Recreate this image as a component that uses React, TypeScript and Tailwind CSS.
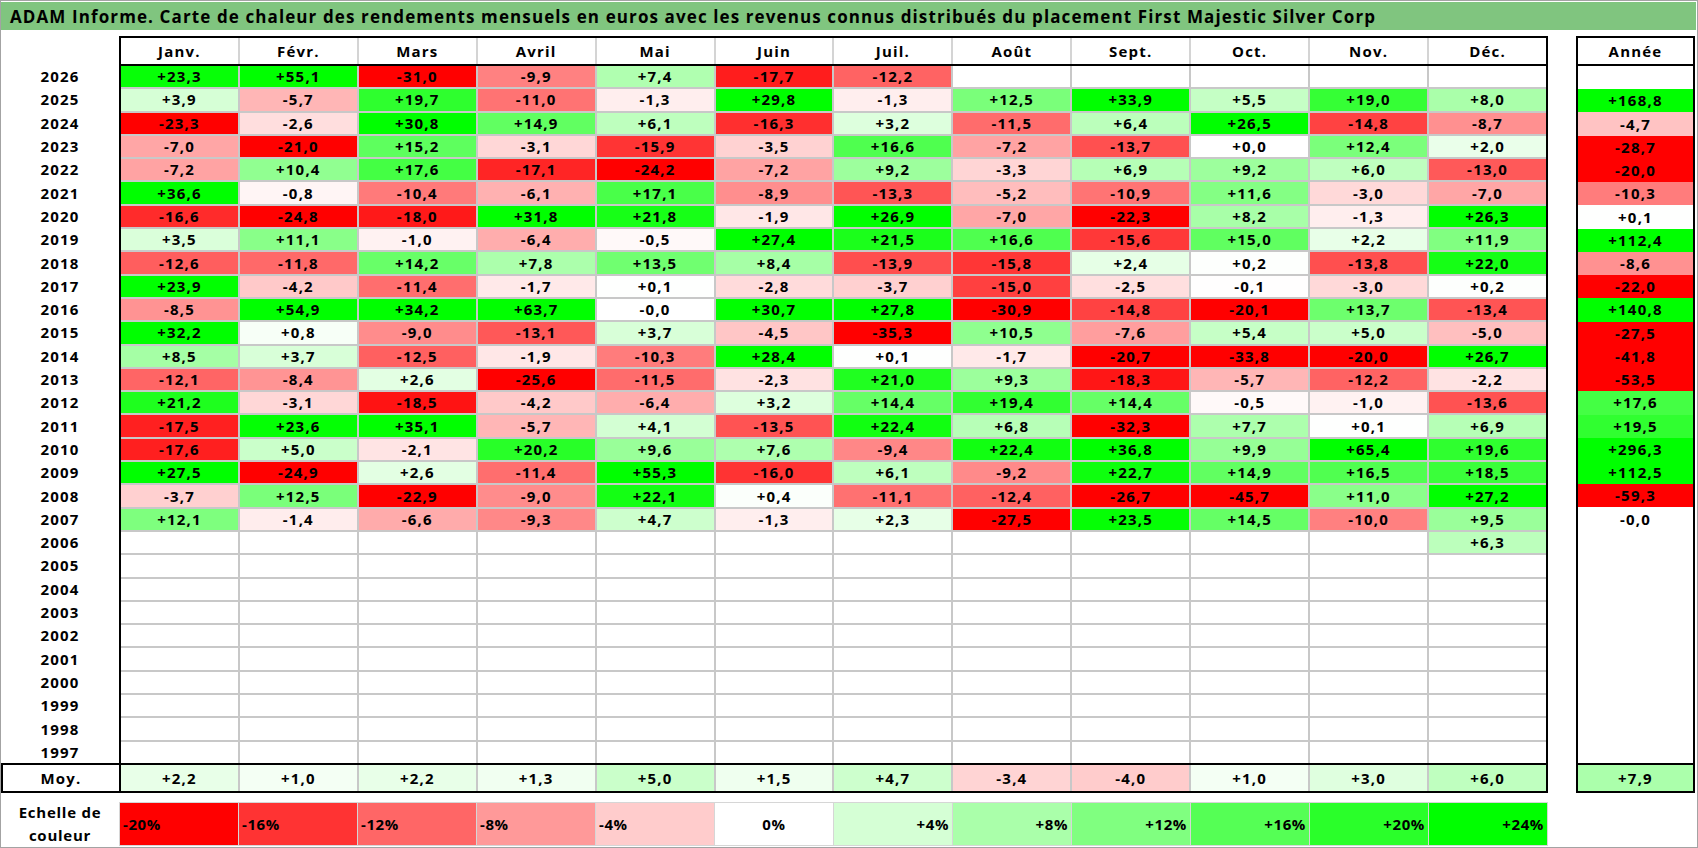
const months = ["Janv.", "Févr.", "Mars", "Avril", "Mai", "Juin", "Juil.", "Août", "Sept.", "Oct.", "Nov.", "Déc."];

// year, 12 months, year total ("" = no value)
const rows: [string, string[], string][] = [
  ["2026", ["+23,3", "+55,1", "-31,0", "-9,9", "+7,4", "-17,7", "-12,2", "", "", "", "", ""], ""],
  ["2025", ["+3,9", "-5,7", "+19,7", "-11,0", "-1,3", "+29,8", "-1,3", "+12,5", "+33,9", "+5,5", "+19,0", "+8,0"], "+168,8"],
  ["2024", ["-23,3", "-2,6", "+30,8", "+14,9", "+6,1", "-16,3", "+3,2", "-11,5", "+6,4", "+26,5", "-14,8", "-8,7"], "-4,7"],
  ["2023", ["-7,0", "-21,0", "+15,2", "-3,1", "-15,9", "-3,5", "+16,6", "-7,2", "-13,7", "+0,0", "+12,4", "+2,0"], "-28,7"],
  ["2022", ["-7,2", "+10,4", "+17,6", "-17,1", "-24,2", "-7,2", "+9,2", "-3,3", "+6,9", "+9,2", "+6,0", "-13,0"], "-20,0"],
  ["2021", ["+36,6", "-0,8", "-10,4", "-6,1", "+17,1", "-8,9", "-13,3", "-5,2", "-10,9", "+11,6", "-3,0", "-7,0"], "-10,3"],
  ["2020", ["-16,6", "-24,8", "-18,0", "+31,8", "+21,8", "-1,9", "+26,9", "-7,0", "-22,3", "+8,2", "-1,3", "+26,3"], "+0,1"],
  ["2019", ["+3,5", "+11,1", "-1,0", "-6,4", "-0,5", "+27,4", "+21,5", "+16,6", "-15,6", "+15,0", "+2,2", "+11,9"], "+112,4"],
  ["2018", ["-12,6", "-11,8", "+14,2", "+7,8", "+13,5", "+8,4", "-13,9", "-15,8", "+2,4", "+0,2", "-13,8", "+22,0"], "-8,6"],
  ["2017", ["+23,9", "-4,2", "-11,4", "-1,7", "+0,1", "-2,8", "-3,7", "-15,0", "-2,5", "-0,1", "-3,0", "+0,2"], "-22,0"],
  ["2016", ["-8,5", "+54,9", "+34,2", "+63,7", "-0,0", "+30,7", "+27,8", "-30,9", "-14,8", "-20,1", "+13,7", "-13,4"], "+140,8"],
  ["2015", ["+32,2", "+0,8", "-9,0", "-13,1", "+3,7", "-4,5", "-35,3", "+10,5", "-7,6", "+5,4", "+5,0", "-5,0"], "-27,5"],
  ["2014", ["+8,5", "+3,7", "-12,5", "-1,9", "-10,3", "+28,4", "+0,1", "-1,7", "-20,7", "-33,8", "-20,0", "+26,7"], "-41,8"],
  ["2013", ["-12,1", "-8,4", "+2,6", "-25,6", "-11,5", "-2,3", "+21,0", "+9,3", "-18,3", "-5,7", "-12,2", "-2,2"], "-53,5"],
  ["2012", ["+21,2", "-3,1", "-18,5", "-4,2", "-6,4", "+3,2", "+14,4", "+19,4", "+14,4", "-0,5", "-1,0", "-13,6"], "+17,6"],
  ["2011", ["-17,5", "+23,6", "+35,1", "-5,7", "+4,1", "-13,5", "+22,4", "+6,8", "-32,3", "+7,7", "+0,1", "+6,9"], "+19,5"],
  ["2010", ["-17,6", "+5,0", "-2,1", "+20,2", "+9,6", "+7,6", "-9,4", "+22,4", "+36,8", "+9,9", "+65,4", "+19,6"], "+296,3"],
  ["2009", ["+27,5", "-24,9", "+2,6", "-11,4", "+55,3", "-16,0", "+6,1", "-9,2", "+22,7", "+14,9", "+16,5", "+18,5"], "+112,5"],
  ["2008", ["-3,7", "+12,5", "-22,9", "-9,0", "+22,1", "+0,4", "-11,1", "-12,4", "-26,7", "-45,7", "+11,0", "+27,2"], "-59,3"],
  ["2007", ["+12,1", "-1,4", "-6,6", "-9,3", "+4,7", "-1,3", "+2,3", "-27,5", "+23,5", "+14,5", "-10,0", "+9,5"], "-0,0"],
  ["2006", ["", "", "", "", "", "", "", "", "", "", "", "+6,3"], ""],
  ...["2005", "2004", "2003", "2002", "2001", "2000", "1999", "1998", "1997"].map(
    (y): [string, string[], string] => [y, Array(12).fill(""), ""]
  ),
];

const avg = ["+2,2", "+1,0", "+2,2", "+1,3", "+5,0", "+1,5", "+4,7", "-3,4", "-4,0", "+1,0", "+3,0", "+6,0"];
const avgYear = "+7,9";

const scale = ["-20%", "-16%", "-12%", "-8%", "-4%", "0%", "+4%", "+8%", "+12%", "+16%", "+20%", "+24%"];

// red below zero (full at -20), green above (full at +24)
function heat(s: string) {
  if (!s) return "#ffffff";
  const v = parseFloat(s.replace(",", ".").replace("%", ""));
  if (v > 0) {
    const c = Math.round(255 * (1 - Math.min(v, 24) / 24));
    return `rgb(${c},255,${c})`;
  }
  if (v < 0) {
    const c = Math.round(255 * (1 - Math.min(-v, 20) / 20));
    return `rgb(255,${c},${c})`;
  }
  return "#ffffff";
}

const Cell = ({ value }: { value: string }) => (
  <div className="flex items-center justify-center" style={{ backgroundColor: heat(value) }}>
    {value}
  </div>
);

export default function App() {
  return (
    <div className="w-[1698px] h-[848px] overflow-hidden bg-white border border-[#a3a3a3] font-['Open_Sans',sans-serif] text-black font-bold text-[15px] tracking-[0.08em] leading-none">
      {/* Title */}
      <div className="h-[28px] mr-[1px] mt-[1px] bg-[#80c57f] flex items-center pl-[9px] text-[17px] tracking-[0.065em]">
        ADAM Informe. Carte de chaleur des rendements mensuels en euros avec les revenus connus distribués du placement First Majestic Silver Corp
      </div>

      <div className="mt-[6px] flex">
        {/* Monthly table */}
        <div className="w-[1547px] flex flex-col">
          <div className="flex h-[30px]">
            <div className="w-[118px]" />
            <div className="flex-1 border-2 border-black grid grid-cols-12 gap-x-[2px] bg-[#d4d4d4]">
              {months.map((m) => (
                <div key={m} className="bg-white flex items-center justify-center">
                  {m}
                </div>
              ))}
            </div>
          </div>

          <div className="flex h-[697px]">
            <div className="w-[118px] grid grid-rows-[repeat(30,minmax(0,1fr))] gap-y-[2px]">
              {rows.map(([y]) => (
                <div key={y} className="flex items-center justify-center">
                  {y}
                </div>
              ))}
            </div>
            <div className="flex-1 border-x-2 border-black grid grid-cols-12 grid-rows-[repeat(30,minmax(0,1fr))] gap-[2px] bg-[#c8c8c8]">
              {rows.map(([y, vals]) => vals.map((v, i) => <Cell key={y + i} value={v} />))}
            </div>
          </div>

          <div className="flex h-[30px] border-2 border-black">
            <div className="w-[118px] border-r-2 border-black flex items-center justify-center">Moy.</div>
            <div className="flex-1 grid grid-cols-12 gap-x-[2px] bg-[#c8c8c8]">
              {avg.map((v, i) => (
                <Cell key={i} value={v} />
              ))}
            </div>
          </div>

          {/* Colour scale */}
          <div className="mt-[9px] flex h-[44px]">
            <div className="w-[118px] flex flex-col items-center justify-center leading-[23px] tracking-[0.05em]">
              <span>Echelle de</span>
              <span>couleur</span>
            </div>
            <div className="flex-1 grid grid-cols-12 gap-x-[1px] bg-[#d6d6d6] border border-[#d6d6d6] tracking-[0.04em]">
              {scale.map((s) => (
                <div
                  key={s}
                  className={
                    s.startsWith("-")
                      ? "flex items-center justify-start pl-[3px]"
                      : s === "0%"
                        ? "flex items-center justify-center"
                        : "flex items-center justify-end pr-[3px]"
                  }
                  style={{ backgroundColor: heat(s) }}
                >
                  {s}
                </div>
              ))}
            </div>
          </div>
        </div>

        {/* Year totals */}
        <div className="ml-[28px] w-[119px] flex flex-col">
          <div className="h-[30px] border-2 border-black flex items-center justify-center">Année</div>
          <div className="h-[697px] border-x-2 border-black grid grid-rows-[repeat(30,minmax(0,1fr))]">
            {rows.map(([y, , total]) => (
              <Cell key={y} value={total} />
            ))}
          </div>
          <div className="h-[30px] border-2 border-black grid">
            <Cell value={avgYear} />
          </div>
        </div>
      </div>
    </div>
  );
}
